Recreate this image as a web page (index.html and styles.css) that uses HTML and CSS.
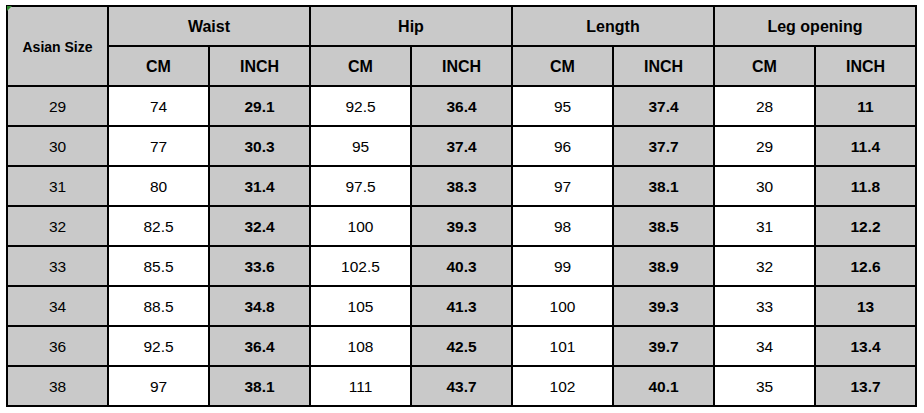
FILE: index.html
```html
<!DOCTYPE html>
<html>
<head>
<meta charset="utf-8">
<link rel="stylesheet" href="styles.css">
</head>
<body>
<div class="wrap">
  <div class="sheet">
    <div class="c g hd size">Asian Size</div>
    <div class="c g hd grp">Waist</div>
    <div class="c g hd grp">Hip</div>
    <div class="c g hd grp">Length</div>
    <div class="c g hd grp">Leg opening</div>
    <div class="c g hd">CM</div><div class="c g hd">INCH</div>
    <div class="c g hd">CM</div><div class="c g hd">INCH</div>
    <div class="c g hd">CM</div><div class="c g hd">INCH</div>
    <div class="c g hd">CM</div><div class="c g hd">INCH</div>

    <div class="c g">29</div><div class="c">74</div><div class="c g b">29.1</div><div class="c">92.5</div><div class="c g b">36.4</div><div class="c">95</div><div class="c g b">37.4</div><div class="c">28</div><div class="c g b">11</div>
    <div class="c g">30</div><div class="c">77</div><div class="c g b">30.3</div><div class="c">95</div><div class="c g b">37.4</div><div class="c">96</div><div class="c g b">37.7</div><div class="c">29</div><div class="c g b">11.4</div>
    <div class="c g">31</div><div class="c">80</div><div class="c g b">31.4</div><div class="c">97.5</div><div class="c g b">38.3</div><div class="c">97</div><div class="c g b">38.1</div><div class="c">30</div><div class="c g b">11.8</div>
    <div class="c g">32</div><div class="c">82.5</div><div class="c g b">32.4</div><div class="c">100</div><div class="c g b">39.3</div><div class="c">98</div><div class="c g b">38.5</div><div class="c">31</div><div class="c g b">12.2</div>
    <div class="c g">33</div><div class="c">85.5</div><div class="c g b">33.6</div><div class="c">102.5</div><div class="c g b">40.3</div><div class="c">99</div><div class="c g b">38.9</div><div class="c">32</div><div class="c g b">12.6</div>
    <div class="c g">34</div><div class="c">88.5</div><div class="c g b">34.8</div><div class="c">105</div><div class="c g b">41.3</div><div class="c">100</div><div class="c g b">39.3</div><div class="c">33</div><div class="c g b">13</div>
    <div class="c g">36</div><div class="c">92.5</div><div class="c g b">36.4</div><div class="c">108</div><div class="c g b">42.5</div><div class="c">101</div><div class="c g b">39.7</div><div class="c">34</div><div class="c g b">13.4</div>
    <div class="c g">38</div><div class="c">97</div><div class="c g b">38.1</div><div class="c">111</div><div class="c g b">43.7</div><div class="c">102</div><div class="c g b">40.1</div><div class="c">35</div><div class="c g b">13.7</div>
  </div>
  <div class="mark"></div>
</div>
</body>
</html>
```

FILE: styles.css
```css
html, body {
  margin: 0;
  padding: 0;
  background: #ffffff;
}
body {
  font-family: "Liberation Sans", Arial, sans-serif;
  color: #000;
}
.wrap {
  position: relative;
  width: fit-content;
  margin: 5px 0 0 6px;
}
.sheet {
  display: grid;
  grid-template-columns: repeat(9, 99px);
  grid-auto-rows: 38px;
  gap: 2px;
  padding: 2px;
  background: #000;
  width: fit-content;
}
.c {
  background: #ffffff;
  display: flex;
  align-items: center;
  justify-content: center;
  font-size: 15.5px;
  padding-top: 2px;
  box-sizing: border-box;
}
.g {
  background: #c9c9c9;
}
.b {
  font-weight: bold;
}
.hd {
  font-weight: bold;
  font-size: 16px;
  padding-top: 1px;
}
.size {
  grid-row: span 2;
  font-size: 14px;
  padding-top: 2px;
}
.grp {
  grid-column: span 2;
}
.mark {
  position: absolute;
  left: 1px;
  top: 1px;
  width: 0;
  height: 0;
  border-top: 5px solid #2f8a2f;
  border-right: 5px solid transparent;
}
```
